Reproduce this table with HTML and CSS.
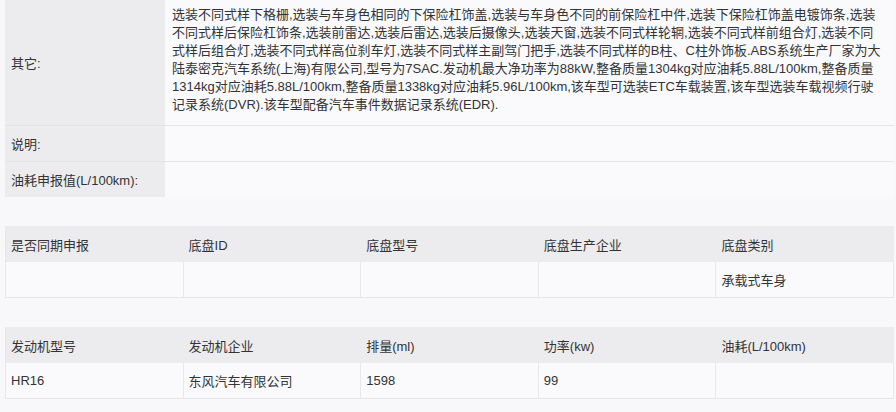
FILE: index.html
```html
<!DOCTYPE html>
<html lang="zh-CN">
<head>
<meta charset="utf-8">
<title>车型参数</title>
<link rel="stylesheet" href="styles.css">
</head>
<body>
<div class="page">
  <div class="spec">
    <div class="k k-tall">其它:</div>
    <div class="v v-long">选装不同式样下格栅,选装与车身色相同的下保险杠饰盖,选装与车身色不同的前保险杠中件,选装下保险杠饰盖电镀饰条,选装<br>不同式样后保险杠饰条,选装前雷达,选装后雷达,选装后摄像头,选装天窗,选装不同式样轮辋,选装不同式样前组合灯,选装不同<br>式样后组合灯,选装不同式样高位刹车灯,选装不同式样主副驾门把手,选装不同式样的B柱、C柱外饰板.ABS系统生产厂家为大<br>陆泰密克汽车系统(上海)有限公司,型号为7SAC.发动机最大净功率为88kW,整备质量1304kg对应油耗5.88L/100km,整备质量<br>1314kg对应油耗5.88L/100km,整备质量1338kg对应油耗5.96L/100km,该车型可选装ETC车载装置,该车型选装车载视频行驶<br>记录系统(DVR).该车型配备汽车事件数据记录系统(EDR).</div>
    <div class="k k-row">说明:</div>
    <div class="v v-row"></div>
    <div class="k k-row k-last">油耗申报值(L/100km):</div>
    <div class="v v-row v-last"></div>
  </div>

  <div class="grid5">
    <div class="th">是否同期申报</div>
    <div class="th">底盘ID</div>
    <div class="th">底盘型号</div>
    <div class="th">底盘生产企业</div>
    <div class="th">底盘类别</div>
    <div class="td"></div>
    <div class="td"></div>
    <div class="td"></div>
    <div class="td"></div>
    <div class="td">承载式车身</div>
  </div>

  <div class="grid5">
    <div class="th">发动机型号</div>
    <div class="th">发动机企业</div>
    <div class="th">排量(ml)</div>
    <div class="th">功率(kw)</div>
    <div class="th">油耗(L/100km)</div>
    <div class="td">HR16</div>
    <div class="td">东风汽车有限公司</div>
    <div class="td">1598</div>
    <div class="td">99</div>
    <div class="td"></div>
  </div>
</div>
</body>
</html>
```

FILE: styles.css
```css
* { box-sizing: border-box; }

html, body {
  margin: 0;
  padding: 0;
  background: #f8f8fa;
}

body {
  font-family: "Liberation Sans", "Noto Sans CJK SC", sans-serif;
  font-size: 13px;
  color: #333336;
}

.page {
  padding: 0 2px 0 5px;
}

.spec {
  display: grid;
  grid-template-columns: 160px 1fr;
}

.k {
  background: #ececee;
  display: flex;
  align-items: center;
  padding-left: 6px;
  border-bottom: 1px solid #e4e4e6;
  white-space: nowrap;
}

.v {
  background: #fafafc;
  border-bottom: 1px solid #e4e4e6;
}

.v-long {
  height: 126px;
  padding: 6px 8px 0 7px;
  line-height: 18px;
  white-space: nowrap;
  overflow: hidden;
}

.k-tall { height: 126px; }

.k-row, .v-row { height: 36px; }

.k-last, .v-last { height: 35px; border-bottom: 0; }

.grid5 {
  display: grid;
  grid-template-columns: repeat(5, 1fr);
  margin-top: 29px;
  border-left: 1px solid #e8e8ea;
  border-bottom: 1px solid #e6e6e8;
}

.th {
  background: #ececee;
  height: 36px;
  display: flex;
  align-items: center;
  padding-left: 5px;
}

.td {
  background: #fafafc;
  height: 35px;
  display: flex;
  align-items: center;
  padding-left: 5px;
  border-right: 1px solid #e8e8ea;
}
```
